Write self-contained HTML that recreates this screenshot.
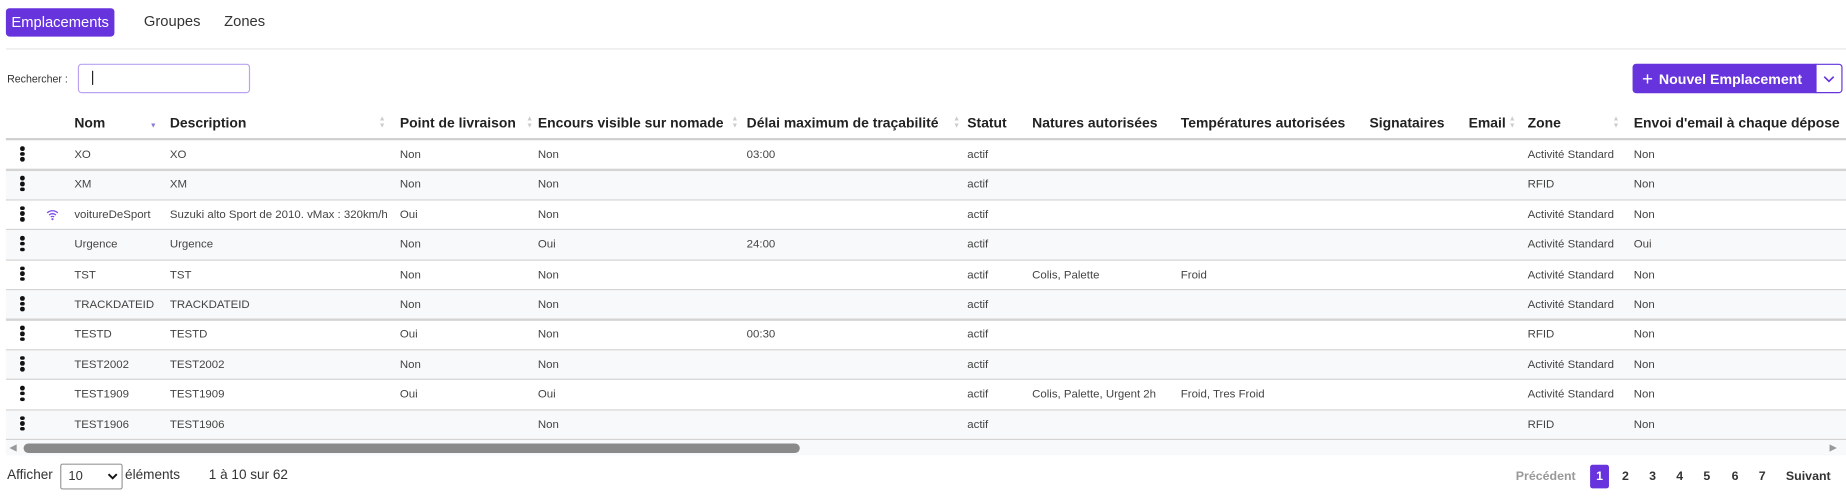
<!DOCTYPE html>
<html><head><meta charset="utf-8">
<style>
html,body{margin:0;padding:0;background:#fff;width:1846px;height:496px;overflow:hidden}
#w{position:absolute;left:0;top:0;width:1565px;height:421px;transform:scale(1.1796);transform-origin:0 0;font-family:"Liberation Sans",sans-serif;color:#333}
.a{position:absolute;white-space:nowrap}
.tab{font-size:12.5px;color:#333;top:11px}
.row{position:absolute;left:5px;width:1560px;height:25.4px}
.row .a{font-size:9.7px;top:7px;color:#444}
.ln{position:absolute;left:5px;width:1560px;height:1.2px;background:#d4d4d4}
.hd{font-size:11.8px;font-weight:bold;color:#222;top:97px}
.srt{position:absolute;top:98px;width:6px;font-size:6px;line-height:6px;color:#ccc}
.dots{position:absolute;left:12px;top:5px;width:4px}
.dots i{display:block;width:3.5px;height:3.5px;border-radius:50%;background:#111;margin-bottom:1.2px}
.pg{font-size:10.5px;font-weight:bold;color:#333;top:398px}
</style></head><body><div id="w">
<div class="a" style="left:5px;top:7px;width:92px;height:24px;background:#6633dd;border-radius:3px;color:#fff;font-size:12.5px;line-height:24px;text-align:center">Emplacements</div>
<div class="a tab" style="left:122px">Groupes</div>
<div class="a tab" style="left:190px">Zones</div>
<div class="a" style="left:5px;top:41px;width:1560px;height:1px;background:#e6e6e6"></div>
<div class="a" style="left:6px;top:62px;font-size:9px">Rechercher :</div>
<div class="a" style="left:66px;top:54px;width:144px;height:23px;border:1px solid #b9a2f0;border-radius:3px"></div>
<div class="a" style="left:78px;top:60px;width:1px;height:12px;background:#222"></div>
<div class="a" style="left:1384px;top:54px;width:156px;height:25px;background:#6633dd;border-radius:3px 0 0 3px;color:#fff;font-size:12px;font-weight:bold;line-height:25px"><span style="font-size:16px;font-weight:normal;margin:0 5px 0 8px;position:relative;top:1px">+</span>Nouvel Emplacement</div>
<div class="a" style="left:1539px;top:54px;width:21px;height:23px;border:1px solid #6633dd;border-radius:0 3px 3px 0;background:#fff"><svg width="21" height="23"><path d="M6.5 10l4 4 4-4" fill="none" stroke="#6633dd" stroke-width="1.4"/></svg></div>

<div class="a hd" style="left:63px">Nom</div>
<div class="a hd" style="left:144px">Description</div>
<div class="a hd" style="left:339px">Point de livraison</div>
<div class="a hd" style="left:456px">Encours visible sur nomade</div>
<div class="a hd" style="left:633px">Délai maximum de traçabilité</div>
<div class="a hd" style="left:820px">Statut</div>
<div class="a hd" style="left:875px">Natures autorisées</div>
<div class="a hd" style="left:1001px">Températures autorisées</div>
<div class="a hd" style="left:1161px">Signataires</div>
<div class="a hd" style="left:1245px">Email</div>
<div class="a hd" style="left:1295px">Zone</div>
<div class="a hd" style="left:1385px">Envoi d'email à chaque dépose</div>
<div class="srt" style="left:127px;top:104px;color:#8877dd">▼</div>
<div class="srt" style="left:321px">▲<br>▼</div>
<div class="srt" style="left:446px">▲<br>▼</div>
<div class="srt" style="left:620px">▲<br>▼</div>
<div class="srt" style="left:808px">▲<br>▼</div>
<div class="srt" style="left:1279px">▲<br>▼</div>
<div class="srt" style="left:1367px">▲<br>▼</div>
<div class="a" style="left:5px;top:117px;width:1560px;height:2px;background:#d0d0d0"></div>

<div style="position:absolute;left:0;top:119px;width:1565px;height:260px">
<div class="row" style="top:0;background:#fff"><div class="dots"><i></i><i></i><i></i></div><div class="a" style="left:58px">XO</div><div class="a" style="left:139px">XO</div><div class="a" style="left:334px">Non</div><div class="a" style="left:451px">Non</div><div class="a" style="left:628px">03:00</div><div class="a" style="left:815px">actif</div><div class="a" style="left:1290px">Activité Standard</div><div class="a" style="left:1380px">Non</div></div>
<div class="row" style="top:25.4px;background:#f8f9fa"><div class="dots"><i></i><i></i><i></i></div><div class="a" style="left:58px">XM</div><div class="a" style="left:139px">XM</div><div class="a" style="left:334px">Non</div><div class="a" style="left:451px">Non</div><div class="a" style="left:815px">actif</div><div class="a" style="left:1290px">RFID</div><div class="a" style="left:1380px">Non</div></div>
<div class="row" style="top:50.8px;background:#fff"><div class="dots"><i></i><i></i><i></i></div><svg class="a" style="left:34px;top:7px" width="11" height="10" viewBox="0 0 11 10"><path d="M1 3.5a6.5 6.5 0 0 1 9 0M2.6 5.3a4.2 4.2 0 0 1 5.8 0M4.1 7a2 2 0 0 1 2.8 0" fill="none" stroke="#7a4be6" stroke-width="1.1"/><circle cx="5.5" cy="8.8" r="0.9" fill="#7a4be6"/></svg><div class="a" style="left:58px">voitureDeSport</div><div class="a" style="left:139px">Suzuki alto Sport de 2010. vMax : 320km/h</div><div class="a" style="left:334px">Oui</div><div class="a" style="left:451px">Non</div><div class="a" style="left:815px">actif</div><div class="a" style="left:1290px">Activité Standard</div><div class="a" style="left:1380px">Non</div></div>
<div class="row" style="top:76.2px;background:#f8f9fa"><div class="dots"><i></i><i></i><i></i></div><div class="a" style="left:58px">Urgence</div><div class="a" style="left:139px">Urgence</div><div class="a" style="left:334px">Non</div><div class="a" style="left:451px">Oui</div><div class="a" style="left:628px">24:00</div><div class="a" style="left:815px">actif</div><div class="a" style="left:1290px">Activité Standard</div><div class="a" style="left:1380px">Oui</div></div>
<div class="row" style="top:101.6px;background:#fff"><div class="dots"><i></i><i></i><i></i></div><div class="a" style="left:58px">TST</div><div class="a" style="left:139px">TST</div><div class="a" style="left:334px">Non</div><div class="a" style="left:451px">Non</div><div class="a" style="left:815px">actif</div><div class="a" style="left:870px">Colis, Palette</div><div class="a" style="left:996px">Froid</div><div class="a" style="left:1290px">Activité Standard</div><div class="a" style="left:1380px">Non</div></div>
<div class="row" style="top:127px;background:#f8f9fa"><div class="dots"><i></i><i></i><i></i></div><div class="a" style="left:58px">TRACKDATEID</div><div class="a" style="left:139px">TRACKDATEID</div><div class="a" style="left:334px">Non</div><div class="a" style="left:451px">Non</div><div class="a" style="left:815px">actif</div><div class="a" style="left:1290px">Activité Standard</div><div class="a" style="left:1380px">Non</div></div>
<div class="row" style="top:152.4px;background:#fff"><div class="dots"><i></i><i></i><i></i></div><div class="a" style="left:58px">TESTD</div><div class="a" style="left:139px">TESTD</div><div class="a" style="left:334px">Oui</div><div class="a" style="left:451px">Non</div><div class="a" style="left:628px">00:30</div><div class="a" style="left:815px">actif</div><div class="a" style="left:1290px">RFID</div><div class="a" style="left:1380px">Non</div></div>
<div class="row" style="top:177.8px;background:#f8f9fa"><div class="dots"><i></i><i></i><i></i></div><div class="a" style="left:58px">TEST2002</div><div class="a" style="left:139px">TEST2002</div><div class="a" style="left:334px">Non</div><div class="a" style="left:451px">Non</div><div class="a" style="left:815px">actif</div><div class="a" style="left:1290px">Activité Standard</div><div class="a" style="left:1380px">Non</div></div>
<div class="row" style="top:203.2px;background:#fff"><div class="dots"><i></i><i></i><i></i></div><div class="a" style="left:58px">TEST1909</div><div class="a" style="left:139px">TEST1909</div><div class="a" style="left:334px">Oui</div><div class="a" style="left:451px">Oui</div><div class="a" style="left:815px">actif</div><div class="a" style="left:870px">Colis, Palette, Urgent 2h</div><div class="a" style="left:996px">Froid, Tres Froid</div><div class="a" style="left:1290px">Activité Standard</div><div class="a" style="left:1380px">Non</div></div>
<div class="row" style="top:228.6px;background:#f8f9fa"><div class="dots"><i></i><i></i><i></i></div><div class="a" style="left:58px">TEST1906</div><div class="a" style="left:139px">TEST1906</div><div class="a" style="left:451px">Non</div><div class="a" style="left:815px">actif</div><div class="a" style="left:1290px">RFID</div><div class="a" style="left:1380px">Non</div></div>
<div class="ln" style="top:24.4px"></div>
<div class="ln" style="top:49.8px"></div>
<div class="ln" style="top:75.2px"></div>
<div class="ln" style="top:100.6px"></div>
<div class="ln" style="top:126px"></div>
<div class="ln" style="top:151.4px"></div>
<div class="ln" style="top:176.8px"></div>
<div class="ln" style="top:202.2px"></div>
<div class="ln" style="top:227.6px"></div>
<div class="ln" style="top:253px"></div>
</div>

<div class="a" style="left:5px;top:373px;width:1560px;height:13px;background:#f8f9fa"></div>
<div class="a" style="left:8px;top:375px;font-size:8px;color:#999">◀</div>
<div class="a" style="left:20px;top:375.5px;width:658px;height:8.5px;border-radius:4px;background:#8a8a8a"></div>
<div class="a" style="left:1551px;top:375px;font-size:8px;color:#999">▶</div>

<div class="a" style="left:6px;top:397px;font-size:11.5px">Afficher</div>
<div class="a" style="left:51px;top:393px;width:51px;height:20px;border:1px solid #999;border-radius:2px;font-size:11px;line-height:20px"><span style="margin-left:6px">10</span><svg style="position:absolute;left:39px;top:7px" width="9" height="6"><path d="M1 1l3.5 3.5L8 1" fill="none" stroke="#111" stroke-width="1.6"/></svg></div>
<div class="a" style="left:106px;top:397px;font-size:11.5px">éléments</div>
<div class="a" style="left:177px;top:397px;font-size:11.5px">1 à 10 sur 62</div>
<div class="a pg" style="left:1285px;color:#999">Précédent</div>
<div class="a" style="left:1348px;top:394px;width:16px;height:20px;background:#6633dd;border-radius:2px;color:#fff;font-size:10.5px;font-weight:bold;text-align:center;line-height:20px">1</div>
<div class="a pg" style="left:1375px">2</div>
<div class="a pg" style="left:1398px">3</div>
<div class="a pg" style="left:1421px">4</div>
<div class="a pg" style="left:1444px">5</div>
<div class="a pg" style="left:1468px">6</div>
<div class="a pg" style="left:1491px">7</div>
<div class="a pg" style="left:1514px">Suivant</div>
</div></body></html>
